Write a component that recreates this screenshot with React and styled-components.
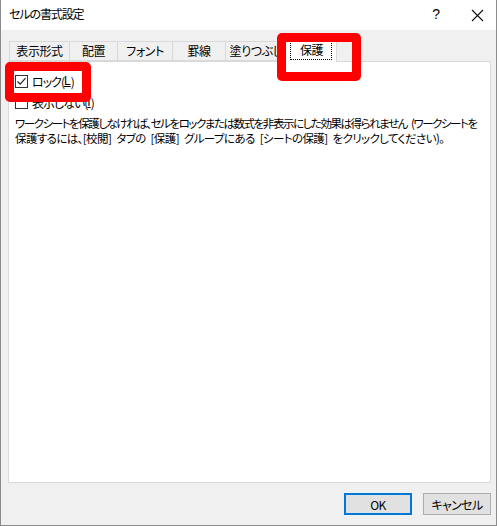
import React from 'react'
import styled, { createGlobalStyle } from 'styled-components'

const GlobalStyle = createGlobalStyle`
  html, body {
    margin: 0;
    padding: 0;
    background: #ffffff;
  }
  body {
    font-family: "Noto Sans CJK JP", "Noto Sans", sans-serif;
    font-size: 12px;
    color: #000;
    font-feature-settings: "palt";
  }
`

const Window = styled.div`
  position: relative;
  width: 495px;
  height: 525px;
  border-left: 1px solid #8a8a8a;
  border-right: 1px solid #8a8a8a;
  border-bottom: 1px solid #8a8a8a;
  display: flex;
  flex-direction: column;
  background: #f0f0f0;
`

const TitleBar = styled.div`
  height: 30px;
  flex: none;
  background: #ffffff;
  display: flex;
  align-items: center;
  padding-left: 8px;
  padding-right: 12px;
`

const Title = styled.div`
  flex: 1;
  font-size: 12px;
  line-height: 14px;
  letter-spacing: -1.1px;
  padding-bottom: 2px;
`

const HelpMark = styled.span`
  font-family: "Liberation Sans", sans-serif;
  font-size: 14px;
  margin-right: 31px;
  padding-bottom: 2px;
`

const Body = styled.div`
  flex: 1;
  display: flex;
  flex-direction: column;
  padding: 0 5px 0 7px;
`

const TabStrip = styled.div`
  display: flex;
  align-items: flex-end;
  height: 25px;
  margin-top: 6px;
  padding-left: 1px;
  position: relative;
  z-index: 1;
`

const Tab = styled.div`
  box-sizing: border-box;
  width: ${p => p.w}px;
  height: ${p => (p.active ? 26 : 20)}px;
  margin-bottom: ${p => (p.active ? -1 : 0)}px;
  margin-right: ${p => (p.active ? -2 : 0)}px;
  margin-left: ${p => (p.active ? -2 : p.first ? 0 : -1)}px;
  border: 1px solid #d9d9d9;
  border-bottom: ${p => (p.active ? 'none' : '1px solid #d9d9d9')};
  background: ${p => (p.active ? '#ffffff' : '#f0f0f0')};
  display: flex;
  align-items: ${p => (p.active ? 'flex-start' : 'center')};
  justify-content: center;
  padding-top: ${p => (p.active ? '5px' : '0')};
  font-size: 12px;
  line-height: 14px;
  letter-spacing: -0.4px;
  position: relative;
  z-index: ${p => (p.active ? 2 : 1)};
`

const FocusLabel = styled.span`
  outline: 1px dotted #000;
  padding: 1px 8px 2px 9px;
`

const Panel = styled.div`
  box-sizing: border-box;
  height: 422px;
  flex: none;
  border: 1px solid #d9d9d9;
  background: #ffffff;
  padding: 12px 6px 0 6px;
  display: flex;
  flex-direction: column;
  overflow: hidden;
`

const CheckRow = styled.label`
  display: flex;
  align-items: center;
  height: 15px;
  margin-bottom: ${p => p.gap || 0}px;
  font-size: 12px;
  line-height: 15px;
  letter-spacing: -1px;
`

const Box = styled.span`
  box-sizing: border-box;
  flex: none;
  width: 13px;
  height: 13px;
  border: 1px solid #333;
  background: #fff;
  margin-right: 4px;
  display: flex;
  align-items: center;
  justify-content: center;
`

const Key = styled.span`
  text-decoration: underline;
  font-family: "Liberation Sans", sans-serif;
  letter-spacing: 0;
`

const Description = styled.div`
  margin-top: 6px;
  display: flex;
  flex-direction: column;
`

const DescLine = styled.span`
  font-size: 11.5px;
  line-height: 15px;
  white-space: nowrap;
  letter-spacing: ${p => p.spacing}px;
  word-spacing: 3px;
`

const Footer = styled.div`
  display: flex;
  justify-content: flex-end;
  gap: 11px;
  padding-top: 10px;
`

const Button = styled.button`
  box-sizing: border-box;
  width: 68px;
  height: 22px;
  background: #e1e1e1;
  border: 1px solid ${p => (p.primary ? '#0078d7' : '#adadad')};
  box-shadow: ${p => (p.primary ? 'inset 0 0 0 1px #0078d7' : 'none')};
  font-family: "Noto Sans CJK JP", "Liberation Sans", sans-serif;
  font-feature-settings: "palt";
  font-size: 12px;
  letter-spacing: -0.6px;
  color: #000;
  padding: 0;
`

const Highlight = styled.div`
  position: absolute;
  left: ${p => p.x}px;
  top: ${p => p.y}px;
  width: ${p => p.w}px;
  height: ${p => p.h}px;
  box-sizing: border-box;
  border: 9px solid #ff0000;
  border-radius: 5px;
  z-index: 10;
  pointer-events: none;
`

const CheckMark = () => (
  <svg width="11" height="11" viewBox="0 0 11 11">
    <path d="M1.5 5.5 L4.2 8.2 L9.5 2.2" fill="none" stroke="#222" strokeWidth="1.2" />
  </svg>
)

const CloseIcon = () => (
  <svg width="13" height="13" viewBox="0 0 13 13">
    <path d="M1 1 L12 12 M12 1 L1 12" stroke="#111" strokeWidth="1.1" />
  </svg>
)

const tabs = [
  { label: '表示形式', w: 61 },
  { label: '配置', w: 49 },
  { label: 'フォント', w: 56 },
  { label: '罫線', w: 54 },
  { label: '塗りつぶし', w: 62 },
  { label: '保護', w: 52, active: true },
]

const App = () => {
  return (
    <>
      <GlobalStyle />
      <Window>
        <TitleBar>
          <Title>セルの書式設定</Title>
          <HelpMark>?</HelpMark>
          <CloseIcon />
        </TitleBar>
        <Body>
          <TabStrip>
            {tabs.map((t, i) => (
              <Tab key={t.label} w={t.w} active={t.active} first={i === 0}>
                {t.active ? <FocusLabel>{t.label}</FocusLabel> : t.label}
              </Tab>
            ))}
          </TabStrip>
          <Panel>
            <CheckRow gap={6}>
              <Box><CheckMark /></Box>
              ロック(<Key>L</Key>)
            </CheckRow>
            <CheckRow>
              <Box />
              表示しない(<Key>I</Key>)
            </CheckRow>
            <Description>
              <DescLine spacing={-1.45}>
                ワークシートを保護しなければ、セルをロックまたは数式を非表示にした効果は得られません (ワークシートを
              </DescLine>
              <DescLine spacing={-0.6}>
                保護するには、[校閲] タブの [保護] グループにある [シートの保護] をクリックしてください)。
              </DescLine>
            </Description>
          </Panel>
          <Footer>
            <Button primary>OK</Button>
            <Button>キャンセル</Button>
          </Footer>
        </Body>
        <Highlight x={4} y={62} w={86} h={40} />
        <Highlight x={276} y={33} w={84} h={48} />
      </Window>
    </>
  )
}

export default App
